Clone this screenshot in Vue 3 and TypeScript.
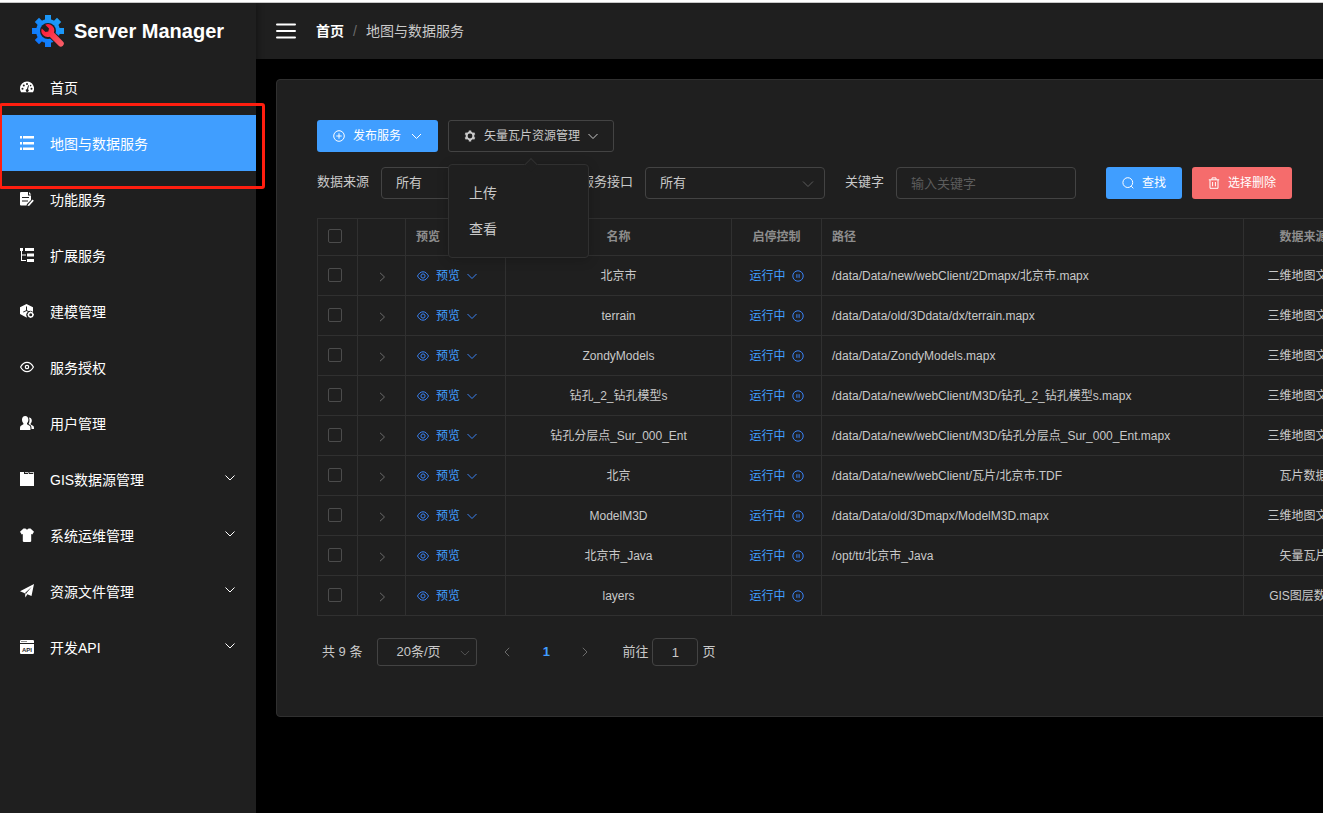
<script setup lang="ts">
import { ref } from 'vue'

interface MenuItem {
  label: string
  icon: string
  active?: boolean
  expandable?: boolean
}

interface ServiceRow {
  name: string
  path: string
  source: string
  menu: boolean
}

const menuItems: MenuItem[] = [
  { label: '首页', icon: 'dashboard' },
  { label: '地图与数据服务', icon: 'list', active: true },
  { label: '功能服务', icon: 'document' },
  { label: '扩展服务', icon: 'tree' },
  { label: '建模管理', icon: 'model' },
  { label: '服务授权', icon: 'eye' },
  { label: '用户管理', icon: 'users' },
  { label: 'GIS数据源管理', icon: 'database', expandable: true },
  { label: '系统运维管理', icon: 'shirt', expandable: true },
  { label: '资源文件管理', icon: 'plane', expandable: true },
  { label: '开发API', icon: 'api', expandable: true },
]

const rows: ServiceRow[] = [
  { name: '北京市', path: '/data/Data/new/webClient/2Dmapx/北京市.mapx', source: '二维地图文档', menu: true },
  { name: 'terrain', path: '/data/Data/old/3Ddata/dx/terrain.mapx', source: '三维地图文档', menu: true },
  { name: 'ZondyModels', path: '/data/Data/ZondyModels.mapx', source: '三维地图文档', menu: true },
  { name: '钻孔_2_钻孔模型s', path: '/data/Data/new/webClient/M3D/钻孔_2_钻孔模型s.mapx', source: '三维地图文档', menu: true },
  { name: '钻孔分层点_Sur_000_Ent', path: '/data/Data/new/webClient/M3D/钻孔分层点_Sur_000_Ent.mapx', source: '三维地图文档', menu: true },
  { name: '北京', path: '/data/Data/new/webClient/瓦片/北京市.TDF', source: '瓦片数据', menu: true },
  { name: 'ModelM3D', path: '/data/Data/old/3Dmapx/ModelM3D.mapx', source: '三维地图文档', menu: true },
  { name: '北京市_Java', path: '/opt/tt/北京市_Java', source: '矢量瓦片', menu: false },
  { name: 'layers', path: '', source: 'GIS图层数据', menu: false },
]

const tileMenuOpen = ref(true)
const keyword = ref('')
const pageNumber = ref('1')
</script>

<template>
  <div class="page">
    <div class="top-edge"></div>
    <div class="shell">
      <aside class="sidebar">
        <div class="brand">
          <svg class="brand-logo" viewBox="0 0 32 32" aria-hidden="true">
            <defs>
              <linearGradient id="gearFill" x1="0" y1="32" x2="32" y2="0" gradientUnits="userSpaceOnUse">
                <stop offset="0" stop-color="#0a6cff" />
                <stop offset="1" stop-color="#22a8f5" />
              </linearGradient>
              <linearGradient id="wrenchFill" x1="0" y1="0" x2="1" y2="1">
                <stop offset="0" stop-color="#ff1030" />
                <stop offset="1" stop-color="#f8626a" />
              </linearGradient>
            </defs>
            <g fill="url(#gearFill)">
              <path d="M13 0h6v6h-6zM13 26h6v6h-6zM0 13h6v6H0zM26 13h6v6h-6z" />
              <path d="M7 2.800 11.500 7.300 7.300 11.500 2.800 7zM25 2.800 29.200 7 24.700 11.500 20.500 7.300zM2.800 25 7.300 20.500 11.500 24.700 7 29.200z" />
              <circle cx="16" cy="16" r="12" />
            </g>
            <circle cx="16" cy="16" r="8" fill="#1f1f1f" />
            <path d="M18 23.500 23.500 18 32 25V32H27z" fill="#1f1f1f" />
            <path d="M13.200 9.800a6.300 6.300 0 0 1 8.700 7.700l9 9a2.900 2.900 0 0 1-4.200 4.200l-9-9A6.300 6.300 0 0 1 9.800 13.400l3.700 3.600 2.800-.6.700-2.900z" fill="url(#wrenchFill)" />
          </svg>
          <span class="brand-name">Server Manager</span>
        </div>
        <nav class="menu" aria-label="主菜单">
          <a
            v-for="item in menuItems"
            :key="item.label"
            href="#"
            class="menu-item"
            :class="{ active: item.active }"
          >
            <svg class="menu-icon" viewBox="0 0 14 14" fill="currentColor" aria-hidden="true">
              <g v-if="item.icon === 'dashboard'">
                <path d="M7 1.500a7 7 0 0 0-7 7c0 1.400.4 2.700 1.100 3.800h11.800A7 7 0 0 0 7 1.500z" />
                <g fill="#1f1f1f">
                  <circle cx="2.500" cy="8.800" r="1" />
                  <circle cx="3.800" cy="5.400" r="1" />
                  <circle cx="7" cy="4" r="1" />
                  <circle cx="11.500" cy="8.800" r="1" />
                  <circle cx="10.600" cy="5.600" r=".8" />
                  <path d="M8.100 5.300 9 5.500 8 9.200a1.500 1.500 0 1 1-1-.2z" />
                </g>
              </g>
              <path v-else-if="item.icon === 'list'" d="M0 0h2v2.500H0zM3 0h11v2.500H3zM0 6h2v2.500H0zM3 6h11v2.500H3zM0 11.500h2V14H0zM3 11.500h11V14H3z" />
              <g v-else-if="item.icon === 'document'">
                <path d="M1 0h7v3.500h3V8L7 12l-.5 1.500H1a1 1 0 0 1-1-1V1a1 1 0 0 1 1-1z" />
                <path d="M9 0l2.300 2.500H9z" />
                <path d="M2 5h7v1H2zM2 8.500h6v1H2z" fill="#1f1f1f" />
                <path d="M8 12.800 12.500 7.500l1.300 1.200-4.500 5L7.500 14z" />
              </g>
              <path v-else-if="item.icon === 'tree'" d="M0 0h3v3H2v3.500h4v1H2V12h4v1H1V3H0zM5 0h9v3H5zM7 5.500h7v3H7zM7 11h7v3H7z" />
              <g v-else-if="item.icon === 'model'">
                <path d="M6.500 0 13 3.300V8A4 4 0 0 0 7 13.200l-.5.3L0 10V3.300z" />
                <path d="M6 2.500h1v3.700l3 1.600-.5.800-3-1.600-3 1.600-.5-.8 3-1.600z" fill="#1f1f1f" />
                <circle cx="10.700" cy="10.700" r="2.200" fill="none" stroke="currentColor" stroke-width="1.400" />
                <path d="M10.200 7.500h1v1.200h-1zM10.200 12.800h1V14h-1zM7.500 10.200h1.200v1H7.500zM12.800 10.200H14v1h-1.200z" />
              </g>
              <g v-else-if="item.icon === 'eye'" fill="none" stroke="currentColor">
                <path d="M.6 7C2.200 4 4.400 2.300 7 2.300S11.800 4 13.400 7C11.800 10 9.600 11.700 7 11.700S2.200 10 .6 7z" stroke-width="1.200" />
                <circle cx="7" cy="7" r="1.700" stroke-width="1.200" />
              </g>
              <g v-else-if="item.icon === 'users'">
                <path d="M5.200 0c2 0 3.200 1.500 3.200 3.600 0 1.600-.6 2.900-1.400 3.700v.9l2.600 1.600c.8.5.9 1.500.9 4.200H0c0-2.700.1-3.700.9-4.200l2.500-1.600v-.9C2.600 6.500 2 5.200 2 3.600 2 1.500 3.200 0 5.200 0z" />
                <path d="M8.800 1.500c1.800 0 3 1.200 3 3 0 1.500-.5 2.400-1.200 3.100v.8l2.400 1.300c.9.500 1 1.400 1 3.300h-2.500c0-2-.2-3.200-1.300-3.900L8.500 8c.7-1 1-2.500 1-4 0-1-.2-1.800-.7-2.500z" />
              </g>
              <path v-else-if="item.icon === 'database'" d="M0 0h4v2h4v-.8h1V2h4v-.8h1V14H0zM5 0h3.500v.8H5zM9.500 0H14v.8H9.500z" />
              <path v-else-if="item.icon === 'shirt'" d="M3.500.5h2C5.900 1.300 6.400 1.600 7 1.600s1.100-.3 1.500-1.100h2L14 3.800 12.300 6.500 11.200 6v7.200l-.8.8H3.600l-.8-.8V6l-1.100.5L0 3.800z" />
              <path v-else-if="item.icon === 'plane'" d="M14 0 11.500 12 7.300 10.200 5.500 13.500 4.800 9.300 0 7.300zM11.800 2.700 5.300 8.800l.5 2.200.5-1.700z" fill-rule="evenodd" />
              <g v-else>
                <path d="M0 4h14v9.200l-.8.8H.8L0 13.200zM.8 0h12.400l.8.800V3H0V.8z" />
                <path d="M1.500 1h1v1h-1zM3.500 1h1v1h-1zM5.500 1h1v1h-1z" fill="#1f1f1f" />
                <text class="api-text" x="7" y="11.500" text-anchor="middle">API</text>
              </g>
            </svg>
            <span class="menu-label">{{ item.label }}</span>
            <svg v-if="item.expandable" class="menu-arrow" viewBox="0 0 12 12" aria-hidden="true">
              <path d="M1.500 2.500 6 7 10.500 2.500" />
            </svg>
            <span v-if="item.active" class="highlight-frame"></span>
          </a>
        </nav>
      </aside>

      <div class="main">
        <header class="header">
          <button class="fold-button" type="button" aria-label="折叠菜单">
            <svg viewBox="0 0 20 16" aria-hidden="true">
              <path d="M1 1.500h18M1 8h18M1 14.500h18" />
            </svg>
          </button>
          <nav class="breadcrumb" aria-label="面包屑">
            <a href="#" class="crumb-home">首页</a>
            <span class="crumb-separator">/</span>
            <span class="crumb-current">地图与数据服务</span>
          </nav>
        </header>

        <main class="content">
          <section class="card">
            <div class="toolbar">
              <button type="button" class="button primary">
                <svg class="icon" viewBox="0 0 12 12" aria-hidden="true">
                  <circle cx="6" cy="6" r="5.300" />
                  <path d="M6 3.300v5.400M3.300 6h5.400" />
                </svg>
                <span>发布服务</span>
                <svg class="arrow wide" viewBox="0 0 10 10" aria-hidden="true"><path d="M.5 3 5 7.500 9.500 3" /></svg>
              </button>
              <div class="dropdown">
                <button
                  type="button"
                  class="button plain"
                  aria-haspopup="menu"
                  :aria-expanded="tileMenuOpen"
                  @click="tileMenuOpen = !tileMenuOpen"
                >
                  <svg class="icon" viewBox="0 0 12 12" aria-hidden="true">
                    <circle cx="6" cy="6" r="3.400" stroke-width="2" />
                    <path d="M6 .6v2M6 9.400v2M1.300 3.300l1.700 1M9 7.700l1.700 1M1.300 8.700l1.700-1M9 4.300l1.700-1" stroke-width="2.400" />
                  </svg>
                  <span>矢量瓦片资源管理</span>
                  <svg class="arrow" viewBox="0 0 10 10" aria-hidden="true"><path d="M.5 3 5 7.500 9.500 3" /></svg>
                </button>
                <div v-if="tileMenuOpen" class="dropdown-menu" role="menu">
                  <button type="button" class="dropdown-item" role="menuitem">上传</button>
                  <button type="button" class="dropdown-item" role="menuitem">查看</button>
                </div>
              </div>
            </div>

            <form class="filters" @submit.prevent>
              <div class="field">
                <label for="source">数据来源</label>
                <div class="select-box">
                  <select id="source"><option>所有</option></select>
                  <svg class="select-arrow" viewBox="0 0 12 12" aria-hidden="true"><path d="M1 3.500 6 8.500 11 3.500" /></svg>
                </div>
              </div>
              <div class="field">
                <label for="interface">服务接口</label>
                <div class="select-box">
                  <select id="interface"><option>所有</option></select>
                  <svg class="select-arrow" viewBox="0 0 12 12" aria-hidden="true"><path d="M1 3.500 6 8.500 11 3.500" /></svg>
                </div>
              </div>
              <div class="field">
                <label for="keyword">关键字</label>
                <input id="keyword" v-model="keyword" class="text-input" type="text" placeholder="输入关键字" />
              </div>
              <div class="filter-actions">
                <button type="submit" class="button primary">
                  <svg class="icon" viewBox="0 0 12 12" aria-hidden="true">
                    <circle cx="5.800" cy="5.600" r="4.900" />
                    <path d="M9.200 9.200 11.300 11.300" />
                  </svg>
                  <span>查找</span>
                </button>
                <button type="button" class="button danger">
                  <svg class="icon" viewBox="0 0 12 12" aria-hidden="true">
                    <path d="M.8 2.800h10.400M4 2.600V.9h4v1.700M2 3v8.300h8V3M4.600 5v4.300M7.400 5v4.300" />
                  </svg>
                  <span>选择删除</span>
                </button>
              </div>
            </form>

            <table class="table">
              <colgroup>
                <col class="col-check" />
                <col class="col-expand" />
                <col class="col-preview" />
                <col class="col-name" />
                <col class="col-state" />
                <col />
                <col class="col-source" />
              </colgroup>
              <thead>
                <tr>
                  <th><input type="checkbox" class="checkbox" aria-label="全选" /></th>
                  <th></th>
                  <th>预览</th>
                  <th class="center">名称</th>
                  <th class="center">启停控制</th>
                  <th>路径</th>
                  <th class="center">数据来源</th>
                </tr>
              </thead>
              <tbody>
                <tr v-for="row in rows" :key="row.name">
                  <td><input type="checkbox" class="checkbox" :aria-label="row.name" /></td>
                  <td>
                    <button type="button" class="expand" aria-label="展开">
                      <svg viewBox="0 0 10 10" aria-hidden="true"><path d="M3 .8 7.500 5 3 9.200" /></svg>
                    </button>
                  </td>
                  <td>
                    <button type="button" class="link-button preview">
                      <svg class="icon" viewBox="0 0 12 12" aria-hidden="true">
                        <path d="M.5 6C1.900 3.300 3.700 1.800 6 1.800S10.100 3.300 11.500 6C10.100 8.700 8.300 10.200 6 10.200S1.900 8.700.5 6z" />
                        <circle cx="6" cy="6" r="2.100" />
                      </svg>
                      <span>预览</span>
                      <svg v-if="row.menu" class="arrow" viewBox="0 0 10 10" aria-hidden="true"><path d="M.5 3 5 7.500 9.500 3" /></svg>
                    </button>
                  </td>
                  <td class="center">{{ row.name }}</td>
                  <td class="center">
                    <button type="button" class="link-button state">
                      <span>运行中</span>
                      <svg class="icon" viewBox="0 0 12 12" aria-hidden="true">
                        <circle cx="6" cy="6" r="5.200" />
                        <path d="M4.900 4.200v3.600M7.100 4.200v3.600" />
                      </svg>
                    </button>
                  </td>
                  <td>{{ row.path }}</td>
                  <td class="center">{{ row.source }}</td>
                </tr>
              </tbody>
            </table>

            <div class="pagination">
              <span class="total">共 9 条</span>
              <div class="select-box small">
                <select aria-label="每页条数"><option>20条/页</option></select>
                <svg class="select-arrow" viewBox="0 0 12 12" aria-hidden="true"><path d="M1 3.500 6 8.500 11 3.500" /></svg>
              </div>
              <div class="pager">
                <button type="button" class="page-button" aria-label="上一页">
                  <svg viewBox="0 0 10 10" aria-hidden="true"><path d="M7.200.8 3 5l4.200 4.200" /></svg>
                </button>
                <button type="button" class="page-button current">1</button>
                <button type="button" class="page-button" aria-label="下一页">
                  <svg viewBox="0 0 10 10" aria-hidden="true"><path d="M2.800.8 7 5 2.800 9.200" /></svg>
                </button>
              </div>
              <label class="jump">
                <span>前往</span>
                <input v-model="pageNumber" type="text" class="jump-input" />
                <span>页</span>
              </label>
            </div>
          </section>
        </main>
      </div>
    </div>
  </div>
</template>

<style>
body {
  margin: 0;
  background: #000;
}
</style>

<style scoped>
.page,
.page * {
  box-sizing: border-box;
}

.page {
  display: flex;
  flex-direction: column;
  min-height: 100vh;
  overflow: hidden;
  background: #000;
  color: #c9c9c9;
  font-family: "Liberation Sans", "Noto Sans CJK SC", sans-serif;
  font-size: 14px;
  line-height: 20px;
}

button,
input,
select {
  margin: 0;
  font: inherit;
  color: inherit;
}

button {
  padding: 0;
  border: 0;
  background: none;
  cursor: pointer;
}

a {
  color: inherit;
  text-decoration: none;
}

svg {
  display: block;
  flex: none;
}

.top-edge {
  position: relative;
  z-index: 3;
  height: 3px;
  background: #fff;
  border-bottom: 1px solid #c8c8c8;
}

.shell {
  display: flex;
  flex: 1;
}

.sidebar {
  position: relative;
  z-index: 2;
  flex: none;
  width: 256px;
  background: #1f1f1f;
  box-shadow: 2px 0 6px rgba(0, 0, 0, 0.35);
}

.brand {
  display: flex;
  align-items: center;
  justify-content: center;
  gap: 10px;
  height: 56px;
}

.brand-logo {
  width: 32px;
  height: 32px;
}

.brand-name {
  color: #fff;
  font-size: 20px;
  font-weight: 700;
}

.menu-item {
  position: relative;
  display: flex;
  align-items: center;
  gap: 16px;
  height: 56px;
  padding: 0 20px;
  color: #fff;
}

.menu-item.active {
  z-index: 1;
  background: #409eff;
}

.menu-icon {
  width: 14px;
  height: 14px;
}

.api-text {
  fill: #1f1f1f;
  font-size: 6px;
  font-weight: 700;
}

.menu-label {
  flex: 1;
  padding-top: 2px;
}

.menu-arrow {
  width: 12px;
  height: 12px;
  fill: none;
  stroke: currentColor;
  stroke-width: 1;
}

.highlight-frame {
  position: absolute;
  inset: -12px -9px -18px -1px;
  border: 3px solid #ff1e0f;
  border-radius: 3px;
  pointer-events: none;
}

.main {
  flex: 1;
  min-width: 0;
}

.header {
  display: flex;
  align-items: center;
  gap: 20px;
  height: 56px;
  padding: 0 20px;
  background: #1f1f1f;
}

.fold-button svg {
  width: 20px;
  height: 16px;
  fill: none;
  stroke: #fff;
  stroke-width: 2;
  stroke-linecap: round;
}

.breadcrumb {
  display: flex;
  gap: 9px;
}

.crumb-home {
  color: #fff;
  font-weight: 700;
}

.crumb-separator {
  color: #6b6b6b;
}

.content {
  padding: 20px;
}

.card {
  min-width: 1129px;
  padding: 40px 40px 50px;
  border: 1px solid #303030;
  border-radius: 4px;
  background: #1f1f1f;
}

.toolbar {
  display: flex;
  gap: 10px;
}

.button {
  display: flex;
  align-items: center;
  gap: 8px;
  height: 32px;
  padding: 0 15px;
  border: 1px solid transparent;
  border-radius: 3px;
  color: #fff;
  font-size: 12px;
}

.button.primary {
  background: #409eff;
}

.button.danger {
  background: #f56c6c;
}

.button.plain {
  border-color: #434343;
  color: #c9c9c9;
}

.icon {
  width: 12px;
  height: 12px;
  fill: none;
  stroke: currentColor;
  stroke-width: 1;
}

.arrow {
  width: 10px;
  height: 10px;
  fill: none;
  stroke: currentColor;
  stroke-width: 1;
}

.arrow.wide {
  width: 11px;
  margin-left: 2px;
}

.dropdown {
  position: relative;
}

.dropdown-menu {
  position: absolute;
  top: 44px;
  left: 0;
  z-index: 5;
  display: flex;
  flex-direction: column;
  width: 141px;
  padding: 10px 0;
  border: 1px solid #303030;
  border-radius: 4px;
  background: #1f1f1f;
  box-shadow: 0 2px 12px rgba(0, 0, 0, 0.2);
}

.dropdown-menu::before {
  content: "";
  position: absolute;
  top: -5px;
  left: 77px;
  width: 8px;
  height: 8px;
  border: 1px solid #303030;
  border-right-color: transparent;
  border-bottom-color: transparent;
  background: #1f1f1f;
  transform: rotate(45deg);
}

.dropdown-item {
  position: relative;
  height: 36px;
  padding: 0 20px;
  text-align: left;
}

.filters {
  display: flex;
  gap: 20px;
  margin-top: 15px;
  font-size: 13px;
}

.field {
  display: flex;
  align-items: center;
  gap: 12px;
}

.field label {
  margin-bottom: 3px;
}

.select-box {
  position: relative;
  width: 180px;
}

.select-box select,
.text-input {
  display: block;
  width: 100%;
  height: 32px;
  padding: 0 14px;
  border: 1px solid #434343;
  border-radius: 4px;
  background: transparent;
  appearance: none;
  outline: none;
}

.text-input {
  width: 180px;
}

.text-input::placeholder {
  color: #5c5c5c;
}

.select-arrow {
  position: absolute;
  top: 50%;
  right: 11px;
  width: 12px;
  height: 12px;
  margin-top: -5px;
  fill: none;
  stroke: #5c5c5c;
  stroke-width: 1;
  pointer-events: none;
}

.filter-actions {
  display: flex;
  gap: 10px;
  margin-left: 10px;
}

.table {
  width: 100%;
  margin-top: 19px;
  table-layout: fixed;
  border-collapse: collapse;
  font-size: 12px;
}

.col-check {
  width: 40px;
}

.col-expand {
  width: 48px;
}

.col-preview {
  width: 100px;
}

.col-name {
  width: 226px;
}

.col-state {
  width: 90px;
}

.col-source {
  width: 120px;
}

.table th,
.table td {
  height: 40px;
  padding: 0 10px;
  border: 1px solid #303030;
  text-align: left;
  white-space: nowrap;
}

.table th {
  height: 37px;
  color: #8d8d8d;
  font-weight: 700;
}

.table .center {
  text-align: center;
}

.checkbox {
  display: block;
  width: 14px;
  height: 14px;
  margin-bottom: 2px;
  border: 1px solid #4c4c4c;
  border-radius: 2px;
  appearance: none;
}

.expand {
  display: block;
  margin: 2px auto 0;
}

.expand svg {
  width: 10px;
  height: 10px;
  fill: none;
  stroke: #6b6b6b;
  stroke-width: 1;
}

.link-button {
  display: flex;
  align-items: center;
  gap: 7px;
  color: #409eff;
}

.link-button.preview {
  padding-left: 1px;
}

.link-button .icon,
.link-button .arrow {
  stroke: #3a83f7;
}

.link-button.state {
  gap: 6px;
  margin: 0 auto;
}

.pagination {
  display: flex;
  align-items: center;
  margin-top: 22px;
  padding-left: 5px;
  font-size: 13px;
}

.select-box.small {
  width: 100px;
  margin-left: 15px;
}

.select-box.small select {
  height: 28px;
  padding: 0 18px;
  border-radius: 3px;
}

.select-box.small .select-arrow {
  right: 7px;
  width: 10px;
}

.pager {
  display: flex;
  gap: 9px;
  margin-left: 15px;
}

.page-button {
  display: flex;
  align-items: center;
  justify-content: center;
  width: 30px;
  height: 28px;
}

.page-button.current {
  color: #409eff;
  font-weight: 700;
}

.page-button svg {
  width: 10px;
  height: 10px;
  fill: none;
  stroke: #6b6b6b;
  stroke-width: 1;
}

.jump {
  display: flex;
  align-items: center;
  gap: 4px;
  margin-left: 22px;
}

.jump-input {
  width: 46px;
  height: 28px;
  padding: 0;
  border: 1px solid #434343;
  border-radius: 4px;
  background: transparent;
  text-align: center;
  outline: none;
}
</style>
